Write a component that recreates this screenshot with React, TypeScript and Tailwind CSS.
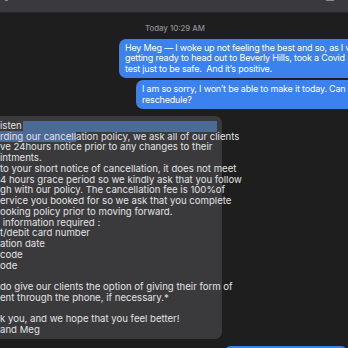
import React from "react";

const sentFirst = [
  "Hey Meg \u2014 I woke up not feeling the best and so, as I was",
  "getting ready to head out to Beverly Hills, took a Covid",
  "test just to be safe.  And it\u2019s positive.",
];

const sentSecond = [
  "I am so sorry, I won\u2019t be able to make it today. Can we",
  "reschedule?",
];

// visible part of each line, the bubble is cut off on the left
const reply = [
  "rding our cancellation policy, we ask all of our clients",
  "ve 24hours notice prior to any changes to their",
  "intments.",
  "to your short notice of cancellation, it does not meet",
  "4 hours grace period so we kindly ask that you follow",
  "gh with our policy. The cancellation fee is 100%of",
  "ervice you booked for so we ask that you complete",
  "ooking policy prior to moving forward.",
  " information required :",
  "t/debit card number",
  "ation date",
  "code",
  "ode",
  "",
  "do give our clients the option of giving their form of",
  "ent through the phone, if necessary.*",
  "",
  "k you, and we hope that you feel better!",
  "and Meg",
];

const SentBubble: React.FC<{ lines: string[]; left: string }> = ({ lines, left }) => (
  <div className={`${left} w-max rounded-[7px] bg-[#3b82ef] py-[3.5px] pl-[6px] pr-[10px] text-[9px] tracking-[-0.2px] text-white`}>
    {lines.map((line, i) => (
      <div key={i} className="h-[10.8px] whitespace-pre leading-[10.8px]">
        {line}
      </div>
    ))}
  </div>
);

export default function App() {
  return (
    <div
      className="flex h-[348px] w-[348px] flex-col overflow-hidden bg-[#1e1e1e] text-[9.6px]"
      style={{ fontFamily: "Inter, 'Liberation Sans', sans-serif" }}
    >
      <div className="flex h-[13px] shrink-0 items-start justify-between border-b border-[#2b2b2d] bg-[#3a393e] px-[5px]">
        <span className="h-[1px] w-[3px] bg-[#8a8a8e]" />
        <span className="mr-[9px] h-[1px] w-[8px] bg-[#8a8a8e]" />
      </div>

      <div className="flex flex-col">
        <div className="mt-[10px] flex justify-center pl-[2px] text-[7.8px] font-medium leading-[10px] text-[#8e8e93]">
          Today 10:29 AM
        </div>

        <div className="mt-[6px] flex flex-col gap-[2px]">
          <SentBubble lines={sentFirst} left="ml-[119px]" />
          <SentBubble lines={sentSecond} left="ml-[136px]" />
        </div>

        <div className="mt-[7.5px] w-[222px] rounded-r-[7px] bg-[#3a3a3c] pt-[4.5px] pb-[3px] text-[#e2e2e4]">
          <div className="flex h-[10.75px] leading-[10.75px]">
            <span className="whitespace-pre">isten</span>
            <span className="mr-[5px] ml-[1px] flex-1 bg-[#4b6a96]" />
          </div>
          {reply.map((line, i) => (
            <div key={i} className="h-[10.75px] whitespace-pre leading-[10.75px]">
              {i === 0 ? (
                <>
                  <span className="bg-[#4b6a96]">rding our cancell</span>
                  {line.slice(17)}
                </>
              ) : (
                line
              )}
            </div>
          ))}
        </div>

        <div className="mt-[7px] ml-[224px] h-[20px] rounded-t-[7px] bg-[#3b82ef]" />
      </div>
    </div>
  );
}
